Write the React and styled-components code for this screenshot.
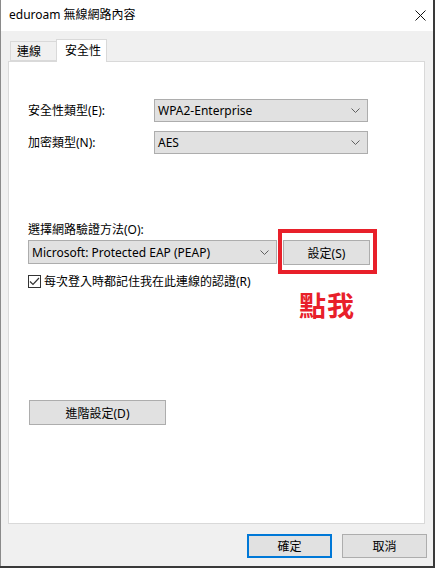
import React from 'react';
import styled, { createGlobalStyle } from 'styled-components';

const GlobalStyle = createGlobalStyle`
  html, body {
    margin: 0;
    padding: 0;
    background: #1f4f5c;
  }
  body {
    font-family: "Segoe UI", "Noto Sans", "Noto Sans CJK TC", sans-serif;
    font-size: 12px;
    color: #000;
  }
`;

const FONT = `"Segoe UI", "Noto Sans", "Noto Sans CJK TC", sans-serif`;

const Frame = styled.div`
  width: 435px;
  height: 568px;
  display: flex;
  background: #3a3a3a;
`;

const Window = styled.div`
  width: 432px;
  height: 566px;
  border-left: 1px solid #8a8a8a;
  display: flex;
  flex-direction: column;
  background: #f0f0f0;
`;

const TitleBar = styled.div`
  height: 31px;
  flex: none;
  background: #fff;
  display: flex;
  align-items: center;
  justify-content: space-between;
  padding: 0 7px 0 8px;
`;

const Title = styled.span`
  font-family: ${FONT};
  font-size: 12px;
  line-height: 16px;
  margin-top: -1px;
`;

const Body = styled.div`
  flex: 1;
  display: flex;
  flex-direction: column;
  padding: 8px 0 0 7px;
`;

const Tabs = styled.div`
  display: flex;
  align-items: flex-end;
  padding-left: 2px;
  height: 22px;
  position: relative;
  z-index: 1;
`;

const Tab = styled.div`
  font-family: ${FONT};
  font-size: 12px;
  white-space: nowrap;
  box-sizing: border-box;
  border: 1px solid #d9d9d9;
  border-bottom: ${(p) => (p.$active ? 'none' : '1px solid #d9d9d9')};
  background: ${(p) => (p.$active ? '#fff' : '#f0f0f0')};
  height: ${(p) => (p.$active ? '23px' : '20px')};
  margin-bottom: ${(p) => (p.$active ? '-1px' : '0')};
  margin-left: ${(p) => (p.$active ? '-1px' : '0')};
  padding: ${(p) => (p.$active ? '3px 0 0 8px' : '2px 0 0 6px')};
  line-height: 16px;
  width: ${(p) => p.$w}px;
`;

const Panel = styled.div`
  width: 417px;
  height: 463px;
  box-sizing: border-box;
  border: 1px solid #d9d9d9;
  background: #fff;
  padding: 37px 0 0 19px;
  display: flex;
  flex-direction: column;
`;

const FieldRow = styled.div`
  display: flex;
  align-items: center;
  height: 23px;
  margin-bottom: ${(p) => p.$gap || 0}px;
`;

const Label = styled.span`
  font-family: ${FONT};
  font-size: 12px;
  line-height: 16px;
  width: ${(p) => p.$w || 126}px;
  flex: none;
`;

const Select = styled.div`
  box-sizing: border-box;
  width: ${(p) => p.$w}px;
  height: ${(p) => p.$h || 23}px;
  border: 1px solid #adadad;
  background: #e1e1e1;
  display: flex;
  align-items: center;
  justify-content: space-between;
  padding: 0 7px 0 3px;
  font-family: ${FONT};
  font-size: 12px;
  flex: none;
`;

const Chevron = () => (
  <svg width="9" height="5" viewBox="0 0 9 5">
    <polyline points="0.5,0.5 4.5,4.5 8.5,0.5" fill="none" stroke="#606060" strokeWidth="1" />
  </svg>
);

const SectionLabel = styled.div`
  font-family: ${FONT};
  font-size: 12px;
  line-height: 16px;
  margin: 68px 0 2px;
`;

const MethodRow = styled.div`
  display: flex;
  align-items: flex-start;
  gap: 6px;
`;

const Annotated = styled.div`
  position: relative;
`;

const RedBox = styled.div`
  position: absolute;
  left: -5px;
  top: -11px;
  right: -7px;
  bottom: -9px;
  border: 4px solid #e8202a;
  pointer-events: none;
`;

const Button = styled.button`
  box-sizing: border-box;
  width: ${(p) => p.$w}px;
  height: ${(p) => p.$h || 25}px;
  border: ${(p) => (p.$primary ? '2px solid #0078d7' : '1px solid #adadad')};
  background: #e1e1e1;
  font-family: ${FONT};
  font-size: 12px;
  color: #000;
  padding: 0;
  margin: 0;
  display: flex;
  align-items: center;
  justify-content: center;
`;

const CheckRow = styled.label`
  display: flex;
  align-items: center;
  gap: 3px;
  margin-top: 8px;
  height: 16px;
  font-family: ${FONT};
  font-size: 12px;
`;

const CheckBox = styled.span`
  width: 13px;
  height: 13px;
  box-sizing: border-box;
  border: 1px solid #333;
  background: #fff;
  display: flex;
  align-items: center;
  justify-content: center;
  flex: none;
`;

const ClickMe = styled.div`
  margin: 1px 0 0 271px;
  font-family: "Noto Sans CJK TC", sans-serif;
  font-weight: 700;
  font-size: 27px;
  line-height: 29px;
  color: #e8202a;
  letter-spacing: 1px;
`;

const AdvancedWrap = styled.div`
  margin-top: 81px;
  padding-left: 1px;
`;

const Footer = styled.div`
  display: flex;
  justify-content: flex-end;
  gap: 10px;
  padding: 10px 6px 0 0;
`;

export default function App() {
  return (
    <>
      <GlobalStyle />
      <Frame>
        <Window>
          <TitleBar>
            <Title>eduroam 無線網路內容</Title>
            <svg width="11" height="11" viewBox="0 0 11 11">
              <path d="M0.5 0.5 L10.5 10.5 M10.5 0.5 L0.5 10.5" stroke="#111" strokeWidth="1" />
            </svg>
          </TitleBar>
          <Body>
            <Tabs>
              <Tab $w={47}>連線</Tab>
              <Tab $w={51} $active>安全性</Tab>
            </Tabs>
            <Panel>
              <FieldRow $gap={9}>
                <Label>安全性類型(E):</Label>
                <Select $w={214}>
                  WPA2-Enterprise
                  <Chevron />
                </Select>
              </FieldRow>
              <FieldRow>
                <Label>加密類型(N):</Label>
                <Select $w={214}>
                  AES
                  <Chevron />
                </Select>
              </FieldRow>
              <SectionLabel>選擇網路驗證方法(O):</SectionLabel>
              <MethodRow>
                <Select $w={249} $h={24}>
                  Microsoft: Protected EAP (PEAP)
                  <Chevron />
                </Select>
                <Annotated>
                  <Button $w={87}>設定(S)</Button>
                  <RedBox />
                </Annotated>
              </MethodRow>
              <CheckRow>
                <CheckBox>
                  <svg width="11" height="9" viewBox="0 0 11 9">
                    <polyline points="1,4.5 4,7.5 10,1" fill="none" stroke="#333" strokeWidth="1.2" />
                  </svg>
                </CheckBox>
                每次登入時都記住我在此連線的認證(R)
              </CheckRow>
              <ClickMe>點我</ClickMe>
              <AdvancedWrap>
                <Button $w={137}>進階設定(D)</Button>
              </AdvancedWrap>
            </Panel>
            <Footer>
              <Button $w={85} $h={24} $primary>確定</Button>
              <Button $w={85} $h={24}>取消</Button>
            </Footer>
          </Body>
        </Window>
      </Frame>
    </>
  );
}
